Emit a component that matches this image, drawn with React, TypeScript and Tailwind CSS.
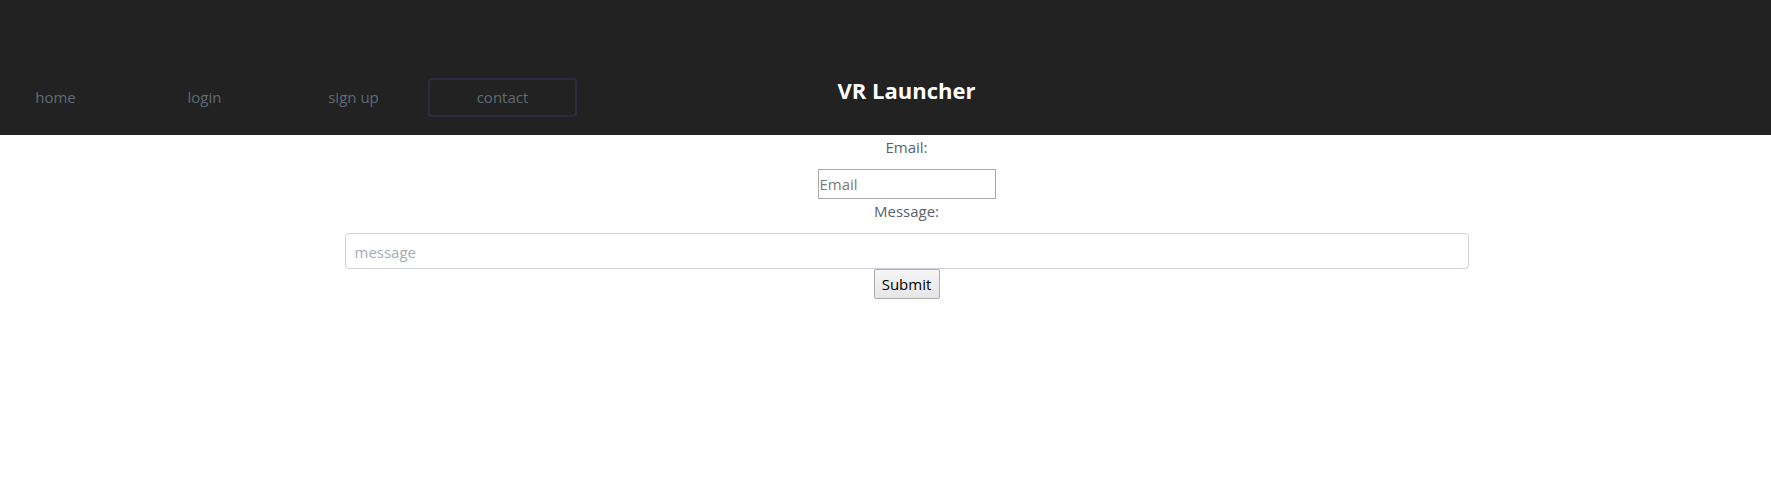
import React from "react";

export default function App() {
  const font = { fontFamily: '"Open Sans", "Noto Sans", sans-serif' };
  const navItems = ["home", "login", "sign up", "contact"];
  return (
    <div className="min-h-[493px] w-full bg-white" style={font}>
      <header className="grid h-[135px] w-full bg-[#222222]">
        <nav className="[grid-area:1/1] -ml-[19px] flex items-start pt-[78px]">
          {navItems.map((item) => (
            <div
              key={item}
              className={
                "flex h-[39px] w-[149px] items-center justify-center rounded-[4px] text-[15px] text-[#5f6a76] " +
                (item === "contact" ? "border-2 border-[#2a2a44]" : "border-2 border-transparent")
              }
            >
              {item}
            </div>
          ))}
        </nav>
        <div className="[grid-area:1/1] flex justify-center pl-[42px] pt-[74px]">
          <h1 className="text-[22px] font-bold leading-[32px] text-white">VR Launcher</h1>
        </div>
      </header>
      <main className="flex w-full flex-col items-center pl-[42px]">
        <label className="mb-[10px] block h-6 text-center text-[15px] leading-6 text-[#5a6270]">Email:</label>
        <input
          type="email"
          placeholder="Email"
          className="h-[30px] w-[178px] border border-[#a9a9a9] bg-white px-[1px] text-[15px] text-[#333] outline-none placeholder:text-[#7a7a7a]"
        />
        <label className="mb-[10px] block h-6 text-center text-[15px] leading-6 text-[#5a6270]">Message:</label>
        <input
          type="text"
          placeholder="message"
          className="h-[36px] w-[1124px] rounded-[4px] border border-[#ced1da] bg-white px-[9px] pt-[2px] text-[15px] text-[#495057] outline-none placeholder:text-[#a8acb3]"
        />
        <button
          type="button"
          className="h-[30px] w-[66px] rounded-[2px] border border-[#adadad] bg-gradient-to-b from-[#f6f6f6] to-[#e6e6e6] text-[15px] text-black"
        >
          Submit
        </button>
      </main>
    </div>
  );
}
